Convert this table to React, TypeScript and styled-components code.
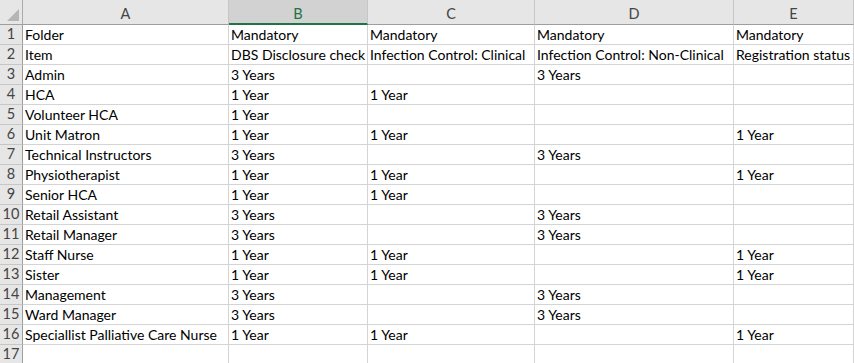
import React from "react";
import styled, { createGlobalStyle, css } from "styled-components";

const Global = createGlobalStyle`
  html, body { margin: 0; padding: 0; background: #ffffff; }
  body { font-family: Lato, "Liberation Sans", sans-serif; }
`;

const COLS = ["A", "B", "C", "D", "E"];
const SELECTED = "B";

const rows: string[][] = [
  ["Folder", "Mandatory", "Mandatory", "Mandatory", "Mandatory"],
  ["Item", "DBS Disclosure check", "Infection Control: Clinical", "Infection Control: Non-Clinical", "Registration status"],
  ["Admin", "3 Years", "", "3 Years", ""],
  ["HCA", "1 Year", "1 Year", "", ""],
  ["Volunteer HCA", "1 Year", "", "", ""],
  ["Unit Matron", "1 Year", "1 Year", "", "1 Year"],
  ["Technical Instructors", "3 Years", "", "3 Years", ""],
  ["Physiotherapist", "1 Year", "1 Year", "", "1 Year"],
  ["Senior HCA", "1 Year", "1 Year", "", ""],
  ["Retail Assistant", "3 Years", "", "3 Years", ""],
  ["Retail Manager", "3 Years", "", "3 Years", ""],
  ["Staff Nurse", "1 Year", "1 Year", "", "1 Year"],
  ["Sister", "1 Year", "1 Year", "", "1 Year"],
  ["Management", "3 Years", "", "3 Years", ""],
  ["Ward Manager", "3 Years", "", "3 Years", ""],
  ["Speciallist Palliative Care Nurse", "1 Year", "1 Year", "", "1 Year"],
  ["", "", "", "", ""],
];

const Sheet = styled.div`
  display: grid;
  grid-template-columns: 23px 206px 139px 167px 199px 1fr;
  grid-auto-rows: 20px;
  grid-template-rows: 25px;
  width: 854px;
  height: 363px;
  overflow: hidden;
  font-size: 14px;
  color: #000;
`;

const Corner = styled.div`
  position: relative;
  background: #e6e6e6;
  border-right: 1px solid #ababab;
  border-bottom: 1px solid #9e9e9e;
  &::after {
    content: "";
    position: absolute;
    right: 3px;
    bottom: 3px;
    width: 0;
    height: 0;
    border-left: 12px solid transparent;
    border-bottom: 12px solid #b5b5b5;
  }
`;

const ColHead = styled.div<{ $selected?: boolean }>`
  display: flex;
  align-items: center;
  justify-content: center;
  padding-top: 3px;
  background: #e6e6e6;
  color: #444;
  border-right: 1px solid #c6c6c6;
  border-bottom: 1px solid #9e9e9e;
  font-size: 14.5px;
  ${(p) =>
    p.$selected &&
    css`
      background: #d2d2d2;
      color: #217346;
      border-bottom: 2px solid #217346;
      padding-top: 4px;
    `}
`;

const RowHead = styled.div`
  display: flex;
  align-items: flex-end;
  justify-content: center;
  line-height: 20px;
  font-size: 14.5px;
  background: #e6e6e6;
  color: #444;
  border-right: 1px solid #9e9e9e;
  border-bottom: 1px solid #c6c6c6;
`;

const Cell = styled.div`
  line-height: 20px;
  padding: 0 2px;
  white-space: nowrap;
  overflow: visible;
  border-right: 1px solid #d4d4d4;
  border-bottom: 1px solid #d4d4d4;
`;

export default function App() {
  return (
    <>
      <Global />
      <Sheet>
        <Corner />
        {COLS.map((c) => (
          <ColHead key={c} $selected={c === SELECTED}>
            {c}
          </ColHead>
        ))}
        {rows.map((r, i) => (
          <React.Fragment key={i}>
            <RowHead>{i + 1}</RowHead>
            {r.map((v, j) => (
              <Cell key={j}>{v}</Cell>
            ))}
          </React.Fragment>
        ))}
      </Sheet>
    </>
  );
}
